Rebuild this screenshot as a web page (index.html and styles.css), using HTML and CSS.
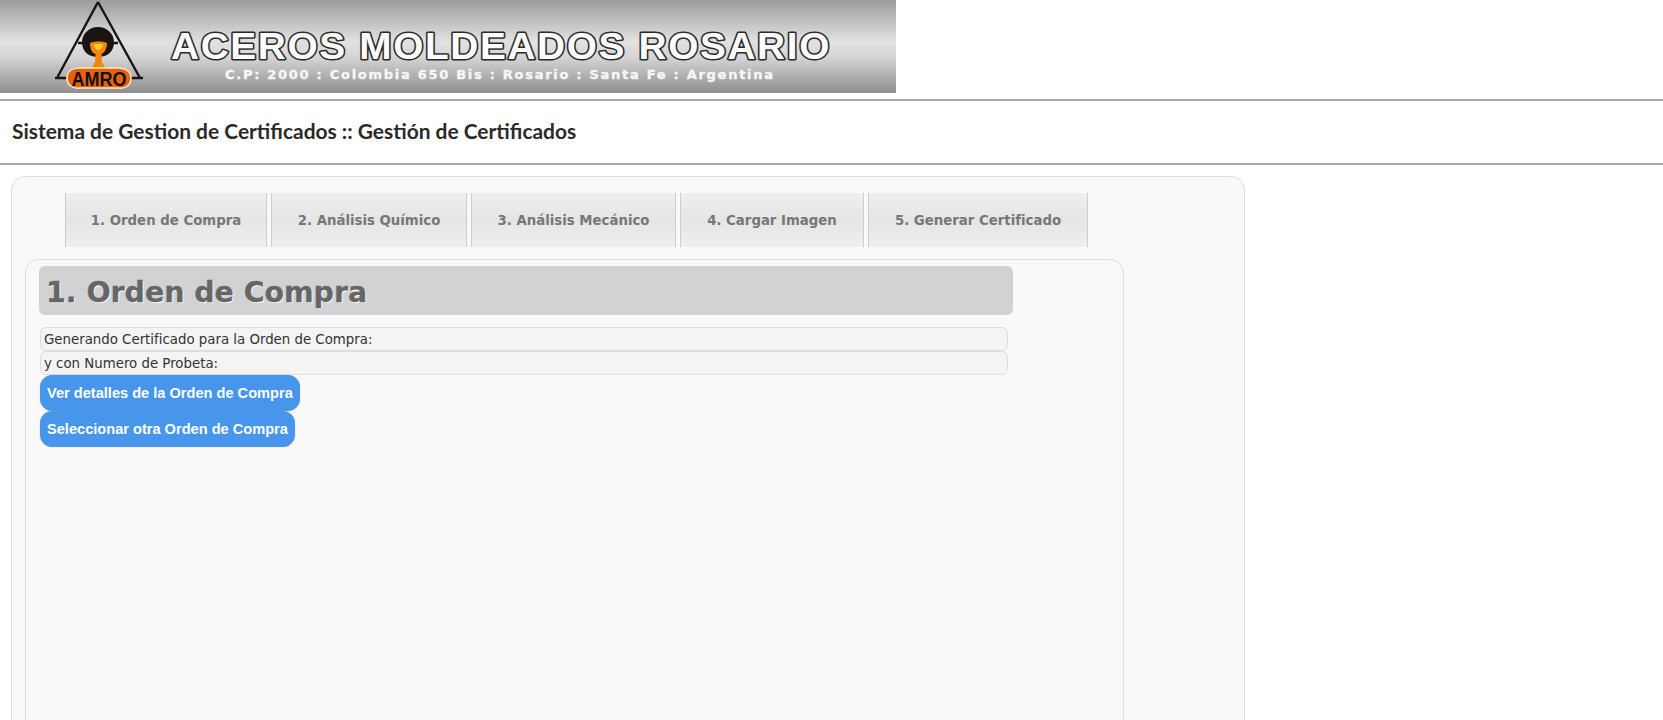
FILE: index.html
```html
<!DOCTYPE html>
<html lang="es">
<head>
    <meta charset="UTF-8">
    <meta name="viewport" content="width=device-width, initial-scale=1.0">
    <title>Sistema de Gestion de Certificados</title>
    <link rel="stylesheet" href="styles.css">
</head>
<body>
    <div class="banner">
        <svg width="896" height="93" viewBox="0 0 896 93">
            <defs>
                <linearGradient id="metal" x1="0" y1="0" x2="0" y2="1">
                    <stop offset="0" stop-color="#9c9c9c"/>
                    <stop offset="0.45" stop-color="#e2e2e2"/>
                    <stop offset="0.62" stop-color="#d4d4d4"/>
                    <stop offset="1" stop-color="#8e8e8e"/>
                </linearGradient>
            </defs>
            <rect width="896" height="93" fill="url(#metal)"/>
            <!-- logo -->
            <path d="M98 2 L57 78 M98 2 L140 78 M55 78 H66 M130 78 H143 M78 43 H118" fill="none" stroke="#1c1410" stroke-width="2.4"/>
            <path d="M82 42 A16 15 0 0 1 114 42 C114 52 107 57 98 57 C89 57 82 52 82 42 Z" fill="#1c1410"/>
            <path d="M90 43 C94 41 103 41 107 43 C107 49 104 53 101.500 54 L102 62 L106 69 H91 L95 62 L95.500 54 C92 53 90 49 90 43 Z" fill="#f2860f"/>
            <path d="M94 44 H103 C103 48 100 50 98.500 50 C96 50 94 48 94 44 Z" fill="#fbc92a"/>
            <path d="M67 78 C67 71 73 68 80 68 H118 C126 68 131 72 131 78 C131 85 126 89 118 88 H80 C73 89 67 85 67 78 Z" fill="#e9600f" stroke="#fde9b8" stroke-width="1.5"/>
            <text class="logo-text" x="99" y="86" text-anchor="middle" textLength="55" lengthAdjust="spacingAndGlyphs">AMRO</text>
            <text class="brand" x="171" y="58.5" textLength="660" lengthAdjust="spacingAndGlyphs">ACEROS MOLDEADOS ROSARIO</text>
            <text class="address" x="225" y="79" textLength="548" lengthAdjust="spacing">C.P: 2000 : Colombia 650 Bis : Rosario : Santa Fe : Argentina</text>
        </svg>
    </div>
    <hr class="rule">
    <h1 class="page-title">Sistema de Gestion de Certificados :: Gestión de Certificados</h1>
    <hr class="rule">

    <div class="outer-panel">
        <ul class="tabs">
            <li class="tab tab-1">1. Orden de Compra</li>
            <li class="tab tab-2">2. Análisis Químico</li>
            <li class="tab tab-3">3. Análisis Mecánico</li>
            <li class="tab tab-4">4. Cargar Imagen</li>
            <li class="tab tab-5">5. Generar Certificado</li>
        </ul>
        <div class="inner-panel">
            <h2 class="section-title">1. Orden de Compra</h2>
            <div class="info-row">Generando Certificado para la Orden de Compra:</div>
            <div class="info-row">y con Numero de Probeta:</div>
            <a class="btn">Ver detalles de la Orden de Compra</a>
            <a class="btn">Seleccionar otra Orden de Compra</a>
        </div>
    </div>
</body>
</html>
```
FILE: styles.css
```css
html, body {
    margin: 0;
    padding: 0;
    height: 720px;
    overflow: hidden;
}
body {
    font-family: "DejaVu Sans", sans-serif;
    background: #fff;
}
.banner {
    height: 93px;
}
.banner svg {
    display: block;
}
.logo-text {
    font-family: "Liberation Sans", sans-serif;
    font-weight: bold;
    font-size: 21px;
    fill: #111;
}
.brand {
    font-family: "Liberation Sans", sans-serif;
    font-weight: bold;
    font-size: 36px;
    letter-spacing: 1.5px;
    fill: #fdfdfd;
    stroke: #2a2a2a;
    stroke-width: 3px;
    paint-order: stroke;
    stroke-linejoin: round;
}
.address {
    font-family: "DejaVu Sans", sans-serif;
    font-weight: bold;
    font-size: 13px;
    fill: #f6f6f6;
    stroke: #f6f6f6;
    stroke-width: 0.4px;
}
.rule {
    margin: 6px 0 0;
    border: 0;
    border-top: 2px solid #a8a8a8;
}
.page-title {
    margin: 0;
    height: 62px;
    line-height: 60px;
    padding-left: 12px;
    font-family: "Lato", sans-serif;
    font-size: 20.95px;
    font-weight: bold;
    color: #2a2a2a;
}
.rule + .page-title + .rule {
    margin-top: 0;
}
.outer-panel {
    margin: 11px 0 0 11px;
    width: 1232px;
    height: 600px;
    background: #f9f9f9;
    border: 1px solid #ddd;
    border-radius: 14px;
    padding-top: 16px;
}
.tabs {
    display: flex;
    list-style: none;
    margin: 0 0 0 53px;
    padding: 0;
    height: 54px;
}
.tab {
    box-sizing: border-box;
    height: 54px;
    line-height: 55px;
    text-align: center;
    font-size: 13.3px;
    font-weight: bold;
    color: #777;
    background: linear-gradient(#efefef, #e5e5e5 50%, #efefef);
    border-left: 1px solid #ccc;
    border-right: 1px solid #ccc;
    margin-right: 4px;
}
.tab-1 { width: 202px; }
.tab-2 { width: 196px; }
.tab-3 { width: 205px; }
.tab-4 { width: 184px; }
.tab-5 { width: 220px; margin-right: 0; }
.inner-panel {
    margin: 12px 0 0 13px;
    width: 1084px;
    height: 500px;
    background: #f9f9f9;
    border: 1px solid #ddd;
    border-radius: 14px;
    padding: 6px 0 0 13px;
}
.section-title {
    margin: 0 0 12px;
    width: 967px;
    height: 49px;
    line-height: 53px;
    padding-left: 7px;
    background: #d2d2d2;
    border-radius: 6px;
    font-size: 28.4px;
    font-weight: bold;
    color: #666;
    -webkit-text-stroke: 0.3px #666;
    text-shadow: 1px 1px 1px #fff;
}
.info-row {
    box-sizing: border-box;
    margin-left: 1px;
    width: 968px;
    height: 24px;
    line-height: 23px;
    padding-left: 3px;
    font-size: 13.33px;
    color: #333;
    background: #f4f4f4;
    border: 1px solid #ddd;
    border-radius: 6px;
}
.btn {
    display: table;
    box-sizing: border-box;
    margin-left: 1px;
    height: 36px;
    line-height: 34px;
    padding: 0 6px;
    font-family: "Liberation Sans", sans-serif;
    font-size: 14.6px;
    font-weight: bold;
    color: #fff;
    background: #4796ec;
    border: 1px solid #4796ec;
    border-radius: 12px;
    box-shadow: 0 0 1px #bbb;
}
```
